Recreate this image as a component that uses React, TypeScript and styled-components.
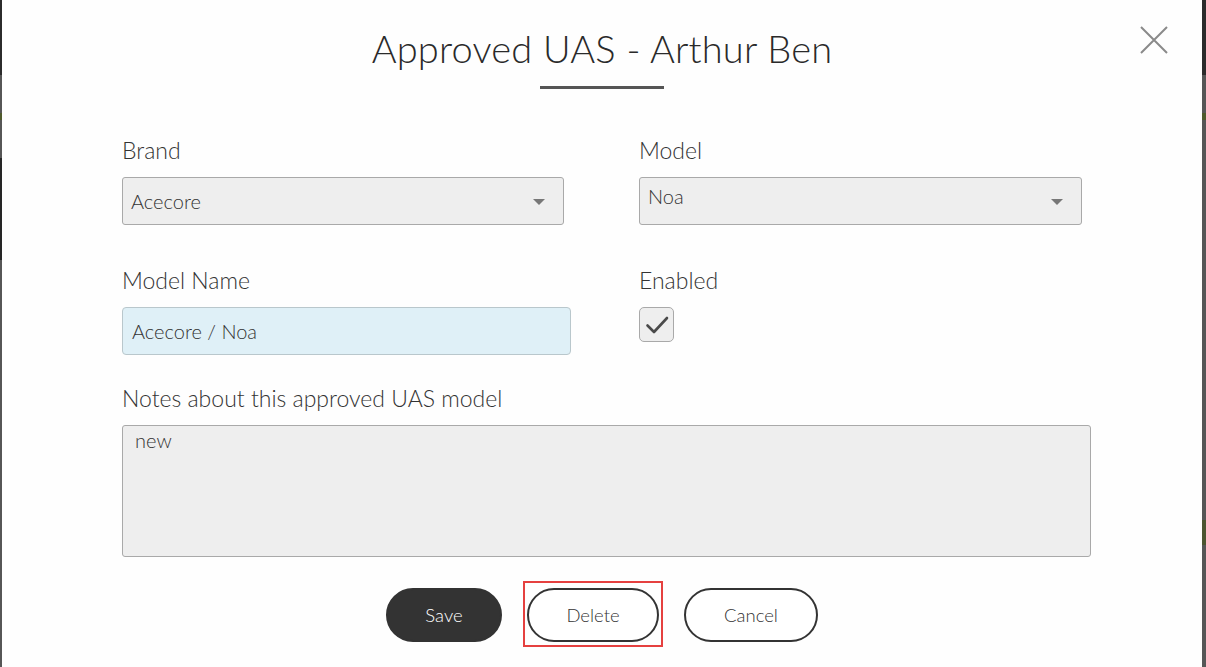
import React from "react";
import styled, { createGlobalStyle } from "styled-components";

const Global = createGlobalStyle`
  html, body { margin: 0; padding: 0; }
  body {
    font-family: Lato, "Noto Sans", "DejaVu Sans", sans-serif;
    color: #333;
    background: #555;
  }
  * { box-sizing: border-box; }
`;

const Page = styled.div`
  display: flex;
  width: 1206px;
  height: 667px;
  overflow: hidden;
`;

const Backdrop = styled.div<{ $w: number; $left?: boolean }>`
  width: ${(p) => p.$w}px;
  flex: none;
  background: ${(p) =>
    p.$left
      ? "linear-gradient(#2b2b2b 0 75px, #565656 75px 113px, #4f5a2c 113px 120px, #565656 120px 158px, #262626 158px 260px, #565656 260px)"
      : "linear-gradient(#2b2b2b 0 75px, #565656 75px 113px, #4f5a2c 113px 120px, #565656 120px 520px, #4c5530 520px 545px, #565656 545px)"};
`;

const Modal = styled.div`
  position: relative;
  flex: 1;
  background: #fefefe;
  display: flex;
  flex-direction: column;
  padding-top: 24px;
`;

const Close = styled.button`
  position: absolute;
  top: 24px;
  right: 32px;
  width: 32px;
  height: 32px;
  border: none;
  background: transparent;
  padding: 0;
  cursor: pointer;
`;

const TitleBlock = styled.div`
  display: flex;
  flex-direction: column;
  align-items: center;
`;

const Title = styled.h1`
  margin: 0;
  font-size: 38px;
  font-weight: 300;
  line-height: 48px;
  color: #2a2a2a;
  letter-spacing: 0.2px;
`;

const Rule = styled.div`
  width: 124px;
  height: 3px;
  background: #555;
  margin-top: 14px;
`;

const Form = styled.div`
  display: grid;
  grid-template-columns: 517px 1fr;
  margin-top: 48px;
  padding-left: 120px;
  padding-right: 108px;
`;

const Field = styled.div<{ $span?: boolean; $mt?: number }>`
  display: flex;
  flex-direction: column;
  margin-top: ${(p) => p.$mt ?? 0}px;
  ${(p) => (p.$span ? "grid-column: 1 / span 2;" : "")}
`;

const Label = styled.label`
  font-size: 23px;
  font-weight: 300;
  line-height: 26px;
  color: #333;
  margin-bottom: 14px;
`;

const Select = styled.div<{ $w: number; $top?: boolean }>`
  position: relative;
  width: ${(p) => p.$w}px;
  height: 48px;
  background: #eeeeee;
  border: 1px solid #a9a9a9;
  border-radius: 3px;
  display: flex;
  align-items: ${(p) => (p.$top ? "flex-start" : "center")};
  padding: ${(p) => (p.$top ? "6px 8px 0" : "0 8px")};
  font-size: 20px;
  font-weight: 300;
  color: #333;
`;

const Caret = styled.span`
  position: absolute;
  right: 18px;
  top: 21px;
  width: 0;
  height: 0;
  border-left: 6px solid transparent;
  border-right: 6px solid transparent;
  border-top: 6px solid #777;
`;

const TextInput = styled.div`
  width: 449px;
  height: 48px;
  background: #dff0f7;
  border: 1px solid #b9c7cc;
  border-radius: 4px;
  display: flex;
  align-items: center;
  padding: 0 9px;
  font-size: 20px;
  font-weight: 300;
  color: #333;
`;

const Check = styled.div`
  width: 35px;
  height: 35px;
  background: #eeeeee;
  border: 1px solid #a9a9a9;
  border-radius: 5px;
  display: flex;
  align-items: center;
  justify-content: center;
`;

const TextArea = styled.div`
  width: 969px;
  height: 132px;
  background: #eeeeee;
  border: 1px solid #a9a9a9;
  border-radius: 3px;
  padding: 2px 12px;
  font-size: 20px;
  font-weight: 300;
  color: #333;
`;

const Actions = styled.div`
  display: flex;
  justify-content: center;
  gap: 25px;
  margin-top: 31px;
`;

const Button = styled.button<{ $primary?: boolean; $w: number }>`
  position: relative;
  width: ${(p) => p.$w}px;
  height: 54px;
  border-radius: 27px;
  font-family: inherit;
  font-size: 18.5px;
  font-weight: 300;
  color: ${(p) => (p.$primary ? "#fff" : "#333")};
  background: ${(p) => (p.$primary ? "#333" : "#fff")};
  border: 2px solid #333;
  cursor: pointer;
`;

const Highlight = styled.span`
  position: absolute;
  left: -6px;
  top: -9px;
  right: -6px;
  bottom: -7px;
  border: 2px solid #e5403f;
  pointer-events: none;
`;

export default function App() {
  return (
    <>
      <Global />
      <Page>
        <Backdrop $w={2} $left />
        <Modal>
          <Close aria-label="Close">
            <svg width="32" height="32" viewBox="0 0 32 32">
              <path d="M3 3 L29 29 M29 3 L3 29" stroke="#8a8a8a" strokeWidth="2" fill="none" />
            </svg>
          </Close>
          <TitleBlock>
            <Title>Approved UAS - Arthur Ben</Title>
            <Rule />
          </TitleBlock>
          <Form>
            <Field>
              <Label>Brand</Label>
              <Select $w={442}>
                Acecore
                <Caret />
              </Select>
            </Field>
            <Field>
              <Label>Model</Label>
              <Select $w={443} $top>
                Noa
                <Caret />
              </Select>
            </Field>
            <Field $mt={42}>
              <Label>Model Name</Label>
              <TextInput>Acecore / Noa</TextInput>
            </Field>
            <Field $mt={42}>
              <Label>Enabled</Label>
              <Check>
                <svg width="26" height="22" viewBox="0 0 26 22">
                  <path d="M3.5 11.5 L10 18 L23 4" stroke="#4a4a4a" strokeWidth="2.6" fill="none" strokeLinecap="round" strokeLinejoin="round" />
                </svg>
              </Check>
            </Field>
            <Field $span $mt={30}>
              <Label>Notes about this approved UAS model</Label>
              <TextArea>new</TextArea>
            </Field>
          </Form>
          <Actions>
            <Button $primary $w={116}>Save</Button>
            <Button $w={132}>
              Delete
              <Highlight />
            </Button>
            <Button $w={134}>Cancel</Button>
          </Actions>
        </Modal>
        <Backdrop $w={4} />
      </Page>
    </>
  );
}
